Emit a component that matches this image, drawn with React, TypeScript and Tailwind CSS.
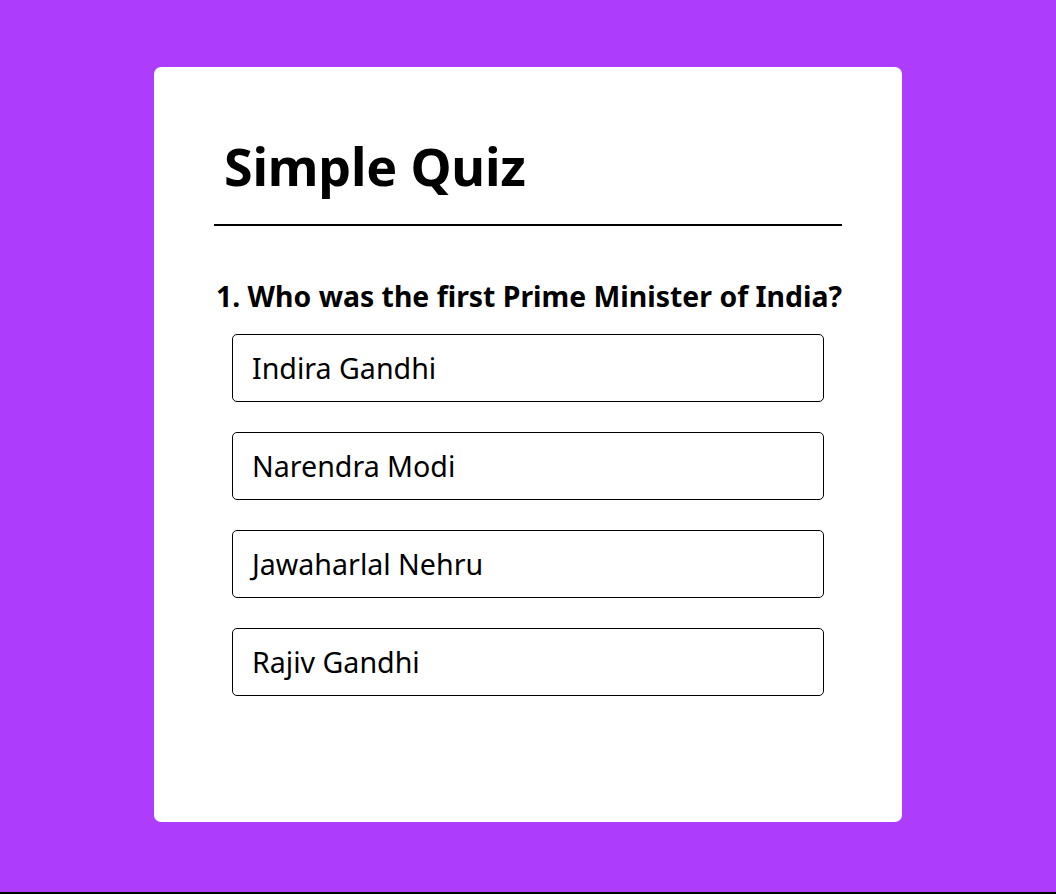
export default function App() {
  const options = ["Indira Gandhi", "Narendra Modi", "Jawaharlal Nehru", "Rajiv Gandhi"];
  return (
    <div
      className="h-[894px] w-full bg-[#ad3cfd] border-b-2 border-black flex justify-center"
      style={{ fontFamily: '"Noto Sans", "Open Sans", sans-serif' }}
    >
      <div className="mt-[67px] w-[748px] h-[755px] bg-white rounded-[7px] px-[60px] pt-[62px] text-black">
        <h1 className="pl-[10px] text-[52px] leading-[74px] font-bold tracking-[-0.2px]">Simple Quiz</h1>
        <div className="mt-[21px] h-[2px] bg-black" />
        <h2 className="mt-[52px] pl-[2px] text-[28.4px] leading-[36px] font-bold whitespace-nowrap">
          1. Who was the first Prime Minister of India?
        </h2>
        <div className="mt-[20px] px-[18px] flex flex-col gap-[30px]">
          {options.map((o) => (
            <button
              key={o}
              className="h-[68px] w-full border border-black rounded-[5px] bg-white text-left pl-[19px] text-[28.6px]"
            >
              {o}
            </button>
          ))}
        </div>
      </div>
    </div>
  );
}
